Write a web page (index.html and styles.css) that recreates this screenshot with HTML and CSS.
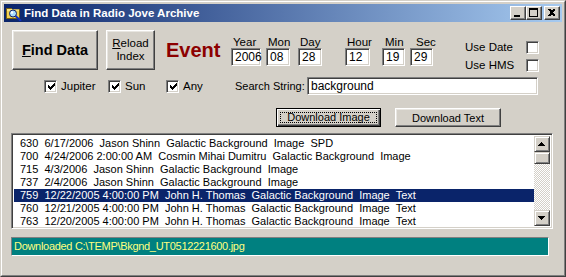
FILE: index.html
```html
<!DOCTYPE html>
<html>
<head>
<meta charset="utf-8">
<title>Find Data in Radio Jove Archive</title>
<link rel="stylesheet" href="styles.css">
</head>
<body>
<div class="window">
  <div class="frame">
    <div class="titlebar">
      <svg class="appicon" width="16" height="16" viewBox="0 0 16 16">
        <path d="M0.5 3.5h5l1 1h7v9h-13z" fill="#f2d255" stroke="#7a6010"/>
        <path d="M1 5h12" stroke="#fff6b0"/>
        <circle cx="7" cy="8.5" r="3.5" fill="#a8dcff" stroke="#10206a"/>
        <circle cx="6" cy="7.5" r="1.2" fill="#ffffff"/>
        <path d="M9.5 11 L15 16" stroke="#1030c0" stroke-width="2"/>
      </svg>
      <span class="title">Find Data in Radio Jove Archive</span>
      <div class="tbtns">
        <span class="tbtn"><svg width="14" height="12" viewBox="0 0 14 12" shape-rendering="crispEdges"><rect x="3" y="8" width="6" height="2" fill="#000"/></svg></span>
        <span class="tbtn"><svg width="14" height="12" viewBox="0 0 14 12" shape-rendering="crispEdges"><path d="M2 1h9v9h-9z M3 3v6h7v-6z" fill="#000" fill-rule="evenodd"/></svg></span>
        <span class="tbtn close"><svg width="14" height="12" viewBox="0 0 14 12" shape-rendering="crispEdges"><path d="M3 2h2l1 1h1l1-1h2v1l-2 2v1l2 2v1h-2l-1-1h-1l-1 1h-2v-1l2-2v-1l-2-2z" fill="#000"/></svg></span>
      </div>
    </div>

    <div class="client">
      <div class="row1">
        <div class="btn btn-find"><span><u>F</u>ind Data</span></div>
        <div class="btn btn-reload"><span><u>R</u>eload<br>Index</span></div>
        <div class="event">Event</div>
        <div class="field f-year"><span class="lbl">Year</span><span class="input">2006</span></div>
        <div class="field f-mon"><span class="lbl">Mon</span><span class="input">08</span></div>
        <div class="field f-day"><span class="lbl">Day</span><span class="input">28</span></div>
        <div class="field f-hour"><span class="lbl">Hour</span><span class="input">12</span></div>
        <div class="field f-min"><span class="lbl lbl-min">Min</span><span class="input">19</span></div>
        <div class="field f-sec"><span class="lbl lbl-sec">Sec</span><span class="input">29</span></div>
        <div class="uses">
          <div class="use"><span class="use-lbl">Use Date</span><span class="chk"></span></div>
          <div class="use"><span class="use-lbl">Use HMS</span><span class="chk"></span></div>
        </div>
      </div>

      <div class="row2">
        <div class="cb cb-jup"><span class="chk"><svg width="9" height="9" viewBox="0 0 9 9" shape-rendering="crispEdges"><path d="M1 3h1v1h1v1h1v-1h1v-1h1v-1h1v-1h1v3h-1v1h-1v1h-1v1h-1v1h-1v-1h-1v-1h-1z" fill="#000"/></svg></span><span>Jupiter</span></div>
        <div class="cb cb-sun"><span class="chk"><svg width="9" height="9" viewBox="0 0 9 9" shape-rendering="crispEdges"><path d="M1 3h1v1h1v1h1v-1h1v-1h1v-1h1v-1h1v3h-1v1h-1v1h-1v1h-1v1h-1v-1h-1v-1h-1z" fill="#000"/></svg></span><span>Sun</span></div>
        <div class="cb cb-any"><span class="chk"><svg width="9" height="9" viewBox="0 0 9 9" shape-rendering="crispEdges"><path d="M1 3h1v1h1v1h1v-1h1v-1h1v-1h1v-1h1v3h-1v1h-1v1h-1v1h-1v1h-1v-1h-1v-1h-1z" fill="#000"/></svg></span><span>Any</span></div>
        <span class="search-lbl">Search String:</span>
        <span class="input search">background</span>
      </div>

      <div class="row3">
        <div class="btn btn-dl btn-default"><span class="focus">Download Image</span></div>
        <div class="btn btn-dl btn-text">Download Text</div>
      </div>

      <div class="listbox">
        <div class="items">
          <div class="item">630  6/17/2006  Jason Shinn  Galactic Background  Image  SPD</div>
          <div class="item">700  4/24/2006 2:00:00 AM  Cosmin Mihai Dumitru  Galactic Background  Image</div>
          <div class="item">715  4/3/2006  Jason Shinn  Galactic Background  Image</div>
          <div class="item">737  2/4/2006  Jason Shinn  Galactic Background  Image</div>
          <div class="item selected">759  12/22/2005 4:00:00 PM  John H. Thomas  Galactic Background  Image  Text</div>
          <div class="item">760  12/21/2005 4:00:00 PM  John H. Thomas  Galactic Background  Image  Text</div>
          <div class="item">763  12/20/2005 4:00:00 PM  John H. Thomas  Galactic Background  Image  Text</div>
        </div>
        <div class="vscroll">
          <span class="sbtn"><svg width="14" height="14" viewBox="0 0 14 14" shape-rendering="crispEdges"><path d="M6 5h1v1h1v1h1v1h1v1h-7v-1h1v-1h1v-1h1z" fill="#000"/></svg></span>
          <span class="thumb"></span>
          <span class="track"></span>
          <span class="sbtn"><svg width="14" height="14" viewBox="0 0 14 14" shape-rendering="crispEdges"><path d="M3 5h7v1h-1v1h-1v1h-1v1h-1v-1h-1v-1h-1v-1h-1z" fill="#000"/></svg></span>
        </div>
      </div>

      <div class="status">Downloaded C:\TEMP\Bkgnd_UT0512221600.jpg</div>
    </div>
  </div>
</div>
</body>
</html>
```
FILE: styles.css
```css
html, body {
  margin: 0;
  padding: 0;
  background: #d4d0c8;
}
body {
  font-family: "Liberation Sans", Arial, sans-serif;
  font-size: 11px;
  color: #000;
}
.window {
  width: 566px;
  height: 277px;
  box-sizing: border-box;
  border: 1px solid;
  border-color: #d4d0c8 #404040 #404040 #d4d0c8;
  background: #d4d0c8;
}
.frame {
  height: 100%;
  box-sizing: border-box;
  border: 1px solid;
  border-color: #ffffff #808080 #808080 #ffffff;
  padding: 2px;
}
.titlebar {
  height: 18px;
  display: flex;
  align-items: center;
  background: linear-gradient(to right, #0a246a, #a6caf0);
  color: #fff;
}
.appicon {
  margin-left: 2px;
  flex: none;
}
.title {
  margin-left: 2px;
  font-weight: bold;
  font-size: 11.5px;
  white-space: nowrap;
}
.tbtns {
  margin-left: auto;
  display: flex;
  padding-right: 2px;
}
.tbtn {
  width: 16px;
  height: 14px;
  box-sizing: border-box;
  background: #d4d0c8;
  border: 1px solid;
  border-color: #ffffff #404040 #404040 #ffffff;
  box-shadow: inset -1px -1px #808080;
  display: block;
}
.tbtn svg { display: block; }
.tbtn.close { margin-left: 2px; }

.client {
  padding-top: 8px;
}

/* generic raised button */
.btn {
  box-sizing: border-box;
  background: #d4d0c8;
  border: 1px solid;
  border-color: #ffffff #404040 #404040 #ffffff;
  box-shadow: inset -1px -1px #808080, inset 1px 1px #e8e6e1;
  display: flex;
  align-items: center;
  justify-content: center;
  text-align: center;
}

/* sunken input */
.input {
  box-sizing: border-box;
  background: #fff;
  border: 1px solid;
  border-color: #808080 #ffffff #ffffff #808080;
  box-shadow: inset 1px 1px #404040, inset -1px -1px #d4d0c8;
  height: 18px;
  line-height: 16px;
  padding-left: 3px;
  display: block;
  white-space: nowrap;
  font-size: 12px;
}

.row1 {
  display: flex;
  align-items: flex-start;
  height: 40px;
}
.btn-find {
  margin-left: 8px;
  width: 86px;
  height: 40px;
  font-weight: bold;
  font-size: 14.5px;
}
.btn-reload {
  margin-left: 8px;
  width: 49px;
  height: 40px;
  font-size: 11.5px;
  line-height: 13px;
}
.event {
  margin-left: 11px;
  width: 65px;
  margin-top: 8px;
  font-size: 20px;
  line-height: 24px;
  font-weight: bold;
  color: #8c0000;
}
.field {
  display: flex;
  flex-direction: column;
  margin-top: 6px;
}
.lbl {
  height: 12px;
  line-height: 12px;
  padding-left: 2px;
  font-size: 11.5px;
  white-space: nowrap;
}
.lbl-min { padding-left: 3px; }
.lbl-sec { padding-left: 6px; }
.f-year { width: 30px; }
.f-mon { width: 24px; margin-left: 5px; }
.f-day { width: 24px; margin-left: 8px; }
.f-hour { width: 25px; margin-left: 23px; }
.f-min { width: 23px; margin-left: 12px; }
.f-sec { width: 23px; margin-left: 5px; }

.uses {
  margin-left: 32px;
  margin-top: 8px;
}
.use {
  display: flex;
  align-items: center;
  height: 18px;
}
.use-lbl {
  width: 61px;
  white-space: nowrap;
  font-size: 11.5px;
}

.chk {
  width: 13px;
  height: 13px;
  box-sizing: border-box;
  background: #fff;
  border: 1px solid;
  border-color: #808080 #ffffff #ffffff #808080;
  box-shadow: inset 1px 1px #404040, inset -1px -1px #d4d0c8;
  display: flex;
  align-items: center;
  justify-content: center;
  flex: none;
}
.chk svg { display: block; margin: 1px 0 0 1px; }

.row2 {
  display: flex;
  align-items: center;
  height: 18px;
  margin-top: 7px;
}
.cb {
  display: flex;
  align-items: center;
  gap: 4px;
  font-size: 11.5px;
}
.cb-jup { margin-left: 40px; width: 64px; }
.cb-sun { width: 58px; }
.cb-any { width: 69px; }
.search-lbl {
  width: 72px;
  white-space: nowrap;
  font-size: 11px;
}
.input.search {
  width: 231px;
}

.row3 {
  display: flex;
  height: 19px;
  margin-top: 13px;
}
.btn-dl {
  height: 19px;
  font-size: 11px;
}
.btn-default {
  margin-left: 272px;
  width: 105px;
  border-color: #000;
  box-shadow: inset 1px 1px #ffffff, inset -1px -1px #404040, inset -2px -2px #808080;
  padding: 3px;
}
.focus {
  flex: 1;
  align-self: stretch;
  box-sizing: border-box;
  border: 1px dotted #000;
  display: flex;
  align-items: center;
  justify-content: center;
  line-height: 11px;
}
.btn-text {
  margin-left: 14px;
  width: 106px;
}

.listbox {
  margin-left: 7px;
  margin-top: 6px;
  width: 542px;
  height: 96px;
  box-sizing: border-box;
  border: 1px solid;
  border-color: #808080 #ffffff #ffffff #808080;
  box-shadow: inset 1px 1px #404040, inset -1px -1px #d4d0c8;
  background: #fff;
  padding: 2px;
  display: flex;
}
.items {
  flex: 1;
  padding-top: 1px;
  overflow: hidden;
}
.item {
  height: 13px;
  line-height: 13px;
  padding-left: 6px;
  white-space: pre;
  font-size: 11px;
}
.item.selected {
  background: #0a246a;
  color: #fff;
}
.vscroll {
  width: 16px;
  display: flex;
  flex-direction: column;
}
.sbtn, .thumb {
  display: block;
  box-sizing: border-box;
  width: 16px;
  height: 16px;
  background: #d4d0c8;
  border: 1px solid;
  border-color: #d4d0c8 #404040 #404040 #d4d0c8;
  box-shadow: inset 1px 1px #ffffff, inset -1px -1px #808080;
  flex: none;
}
.sbtn svg { display: block; }
.thumb { height: 12px; }
.track {
  flex: 1;
  background: repeating-conic-gradient(#d4d0c8 0 25%, #ffffff 0 50%) 0 0 / 2px 2px;
}

.status {
  margin-left: 7px;
  margin-top: 8px;
  width: 538px;
  height: 19px;
  box-sizing: border-box;
  border: 1px solid;
  border-color: #808080 #ffffff #ffffff #808080;
  background: #008080;
  color: #ffff80;
  line-height: 17px;
  padding-left: 2px;
  font-size: 11px;
  letter-spacing: -0.3px;
  white-space: nowrap;
}
```
